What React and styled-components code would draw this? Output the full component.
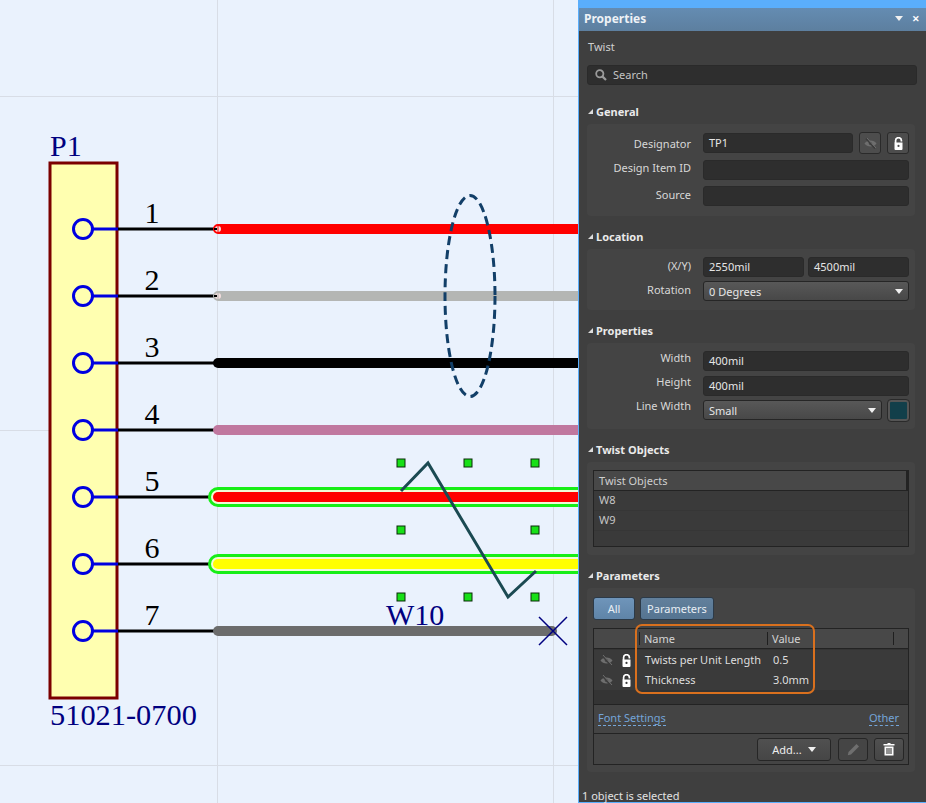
import React from "react";
import styled, { createGlobalStyle } from "styled-components";

const GlobalStyle = createGlobalStyle`
  html, body {
    margin: 0;
    padding: 0;
    background: #eaf2fd;
  }
  * {
    box-sizing: border-box;
  }
`;

const WIRES = [
  { y: 229, color: "#ff0000", label: "1", pad: true },
  { y: 296, color: "#b4b6b4", label: "2", pad: true },
  { y: 363, color: "#000000", label: "3" },
  { y: 430, color: "#c0789f", label: "4" },
  { y: 497, color: "#ff0000", label: "5", selected: true },
  { y: 564, color: "#ffff00", label: "6", selected: true },
  { y: 631, color: "#6c6c6c", label: "7", end: 552 },
];

const HANDLES = [
  [401, 463],
  [468, 463],
  [535, 463],
  [401, 530],
  [535, 530],
  [401, 597],
  [468, 597],
  [535, 597],
];

function Schematic() {
  return (
    <Canvas viewBox="0 0 578 803">
      <rect width="578" height="803" fill="#eaf2fd" />
      {[217.5, 553.5].map((x) => (
        <line key={x} x1={x} y1="0" x2={x} y2="803" stroke="#d8dde6" strokeWidth="1" />
      ))}
      {[96.5, 430.5, 765.5].map((y) => (
        <line key={y} x1="0" y1={y} x2="578" y2={y} stroke="#d8dde6" strokeWidth="1" />
      ))}

      <rect x="50" y="163" width="67" height="535" fill="#ffffb0" stroke="#7b0000" strokeWidth="3" />
      <text x="50" y="156" fontFamily="Liberation Serif" fontSize="30" fill="#000080">P1</text>
      <text x="50" y="725" fontFamily="Liberation Serif" fontSize="30.4" fill="#000080">51021-0700</text>

      {WIRES.map((w) => (
        <g key={w.y}>
          <line x1="93" y1={w.y} x2="118" y2={w.y} stroke="#0000e0" strokeWidth="3" />
          <line x1="118" y1={w.y} x2="214" y2={w.y} stroke="#000" strokeWidth="3" />
          <circle cx="83" cy={w.y} r="9.5" fill="none" stroke="#0000e0" strokeWidth="3" />
          <text x="144.5" y={w.y - 6} fontFamily="Liberation Serif" fontSize="30" fill="#000">{w.label}</text>
          {w.selected && (
            <path
              d={`M578 ${w.y - 8.5} H218 a8.5 8.5 0 0 0 0 17 H578`}
              fill="#f0fbd8"
              stroke="#17ee17"
              strokeWidth="3"
            />
          )}
          <line
            x1="218"
            y1={w.y}
            x2={w.end || 578}
            y2={w.y}
            stroke={w.color}
            strokeWidth="10"
            strokeLinecap={w.end ? "round" : "butt"}
          />
          {!w.pad && !w.end && <circle cx="218" cy={w.y} r="5" fill={w.color} />}
          {w.pad && (
            <>
              <circle cx="218" cy={w.y} r="4" fill="#f4dede" stroke={w.color} strokeWidth="2" />
              <path d={`M214 ${w.y} H217`} stroke="#000" strokeWidth="2" />
              <path d={`M218 ${w.y - 4} V${w.y + 4}`} stroke={w.color} strokeWidth="1" />
            </>
          )}
        </g>
      ))}

      <text x="386" y="625" fontFamily="Liberation Serif" fontSize="30" fill="#000080">W10</text>
      <path d="M539 617 L567 645 M567 617 L539 645" stroke="#000080" strokeWidth="1.5" fill="none" />

      <ellipse
        cx="470"
        cy="296"
        rx="25"
        ry="100.5"
        fill="none"
        stroke="#123f68"
        strokeWidth="3"
        strokeDasharray="9 5"
      />

      <polyline points="401,491 428,463 508,597 536,571" fill="none" stroke="#1b4a52" strokeWidth="3" />
      {HANDLES.map(([x, y]) => (
        <rect key={`${x}-${y}`} x={x - 4} y={y - 4} width="8" height="8" fill="#17e017" stroke="#0a2a0a" strokeWidth="1" />
      ))}
    </Canvas>
  );
}

function LockIcon() {
  return (
    <svg width="9" height="13" viewBox="0 0 9 13">
      <path d="M1.6 6 V3.6 a2.9 2.9 0 0 1 5.8 0 V4.6" fill="none" stroke="#fff" strokeWidth="1.7" />
      <path
        d="M0.5 5.5 H8.5 V12 a1 1 0 0 1 -1 1 H1.5 a1 1 0 0 1 -1 -1 Z M4.5 7.8 a1.1 1.1 0 0 0 0 2.2 a1.1 1.1 0 0 0 0 -2.2 Z"
        fill="#fff"
        fillRule="evenodd"
      />
    </svg>
  );
}

function EyeIcon() {
  return (
    <svg width="13" height="13" viewBox="0 0 13 13">
      <path d="M0.5 6.5 C3 2.5 10 2.5 12.5 6.5 C10 10.5 3 10.5 0.5 6.5 Z" fill="#6e6e6e" />
      <circle cx="6.5" cy="6.5" r="1.7" fill="#4a4a4a" />
      <path d="M2 1.5 L11 11.5" stroke="#3c3c3c" strokeWidth="1.8" />
      <path d="M3 1 L12 11" stroke="#6e6e6e" strokeWidth="1" />
    </svg>
  );
}

function PencilIcon() {
  return (
    <svg width="13" height="13" viewBox="0 0 13 13">
      <path d="M9.5 1 L12 3.5 L4 11.5 L0.8 12.2 L1.5 9 Z" fill="#6f6f6f" />
    </svg>
  );
}

function TrashIcon() {
  return (
    <svg width="12" height="14" viewBox="0 0 12 14">
      <path d="M4.5 1 H7.5 V2 H11.5 V3.4 H0.5 V2 H4.5 Z" fill="#fff" />
      <path
        d="M1.5 4.5 H10.5 V13.5 H1.5 Z M3.4 6 V12 H4.6 V6 Z M5.4 6 V12 H6.6 V6 Z M7.4 6 V12 H8.6 V6 Z"
        fill="#fff"
        fillRule="evenodd"
      />
    </svg>
  );
}

function SearchIcon() {
  return (
    <svg width="12" height="12" viewBox="0 0 12 12">
      <circle cx="4.8" cy="4.8" r="3.6" fill="none" stroke="#9a9a9a" strokeWidth="1.8" />
      <path d="M7.6 7.6 L11 11" stroke="#9a9a9a" strokeWidth="2.2" />
    </svg>
  );
}

function Section({ title, gap, top, bottom, children }) {
  return (
    <>
      <SectionTitle>
        <Caret />
        {title}
      </SectionTitle>
      <SectionBox $gap={gap} $top={top} $bottom={bottom}>
        {children}
      </SectionBox>
    </>
  );
}

// lift: how far the label sits above the centre of its field
function Row({ label, lift = 0, children }) {
  return (
    <FormRow>
      <FieldLabel $lift={lift}>{label}</FieldLabel>
      <Controls>{children}</Controls>
    </FormRow>
  );
}

function Select({ value }) {
  return (
    <SelectBox>
      {value}
      <DownArrow />
    </SelectBox>
  );
}

function App() {
  return (
    <Page>
      <GlobalStyle />
      <Schematic />
      <Panel>
        <PanelHeader>
          <PanelTitle>Properties</PanelTitle>
          <HeaderIcons>
            <DownArrow />
            <CloseMark>✕</CloseMark>
          </HeaderIcons>
        </PanelHeader>
        <PanelBody>
          <Kind>Twist</Kind>
          <SearchBox>
            <SearchIcon />
            Search
          </SearchBox>

          <Section title="General" gap="6.5px" top={9} bottom={10}>
            <Row label="Designator">
              <Field>TP1</Field>
              <IconButton>
                <EyeIcon />
              </IconButton>
              <IconButton>
                <LockIcon />
              </IconButton>
            </Row>
            <Row label="Design Item ID" lift={2}>
              <Field />
            </Row>
            <Row label="Source" lift={2}>
              <Field />
            </Row>
          </Section>

          <Section title="Location" gap="4px" top={8} bottom={9}>
            <Row label="(X/Y)" lift={2}>
              <Field>2550mil</Field>
              <Field>4500mil</Field>
            </Row>
            <Row label="Rotation" lift={2}>
              <Select value="0 Degrees" />
            </Row>
          </Section>

          <Section title="Properties" gap="4.5px" top={8} bottom={9}>
            <Row label="Width" lift={4}>
              <Field>400mil</Field>
            </Row>
            <Row label="Height" lift={4}>
              <Field>400mil</Field>
            </Row>
            <Row label="Line Width" lift={5}>
              <Select value="Small" />
              <Swatch />
            </Row>
          </Section>

          <Section title="Twist Objects" top={8} bottom={8}>
            <ObjectTable>
              <ObjectHeader>Twist Objects</ObjectHeader>
              <ObjectRow>W8</ObjectRow>
              <ObjectRow>W9</ObjectRow>
            </ObjectTable>
          </Section>

          <Section title="Parameters" top={9} bottom={7}>
            <FilterBar>
              <FilterButton $wide={false}>All</FilterButton>
              <FilterButton $wide>Parameters</FilterButton>
            </FilterBar>
            <ParamTable>
              <ParamHeader>
                <span />
                <HeadCell>Name</HeadCell>
                <HeadCell>Value</HeadCell>
                <HeadCell />
              </ParamHeader>
              <ParamBody>
                {[
                  ["Twists per Unit Length", "0.5"],
                  ["Thickness", "3.0mm"],
                ].map(([name, value]) => (
                  <ParamRow key={name}>
                    <RowIcons>
                      <EyeIcon />
                      <LockIcon />
                    </RowIcons>
                    <ParamCell>{name}</ParamCell>
                    <ParamCell>{value}</ParamCell>
                  </ParamRow>
                ))}
              </ParamBody>
              <LinkRow>
                <DashedLink>Font Settings</DashedLink>
                <DashedLink>Other</DashedLink>
              </LinkRow>
              <ActionRow>
                <AddButton>
                  Add...
                  <DownArrow />
                </AddButton>
                <ActionButton $disabled>
                  <PencilIcon />
                </ActionButton>
                <ActionButton>
                  <TrashIcon />
                </ActionButton>
              </ActionRow>
              <Highlight />
            </ParamTable>
          </Section>
        </PanelBody>
        <StatusBar>1 object is selected</StatusBar>
      </Panel>
    </Page>
  );
}

const Page = styled.div`
  display: flex;
  width: 926px;
  height: 803px;
  overflow: hidden;
  font-family: "Noto Sans", "Open Sans", sans-serif;
  font-size: 11px;
  color: #e2e2e2;
`;

const Canvas = styled.svg`
  flex: 0 0 578px;
  width: 578px;
  height: 803px;
  display: block;
`;

const Panel = styled.div`
  flex: 0 0 348px;
  height: 803px;
  display: flex;
  flex-direction: column;
  background: #3f3f3f;
  border-left: 1px solid #5aaefc;
  border-top: 8px solid #5aaefc;
  border-bottom: 1px solid #5aaefc;
`;

const PanelHeader = styled.div`
  height: 23px;
  display: flex;
  align-items: center;
  justify-content: space-between;
  padding: 0 6px 2px 5px;
  background: linear-gradient(#648cb2, #5d7f9f);
`;

const PanelTitle = styled.div`
  font-size: 12px;
  font-weight: 700;
  color: #eef2f6;
`;

const HeaderIcons = styled.div`
  display: flex;
  align-items: center;
  gap: 9px;
`;

const CloseMark = styled.span`
  font-size: 9px;
  font-weight: 700;
  color: #fff;
`;

const PanelBody = styled.div`
  padding: 0 9px 0 8px;
`;

const Kind = styled.div`
  height: 34px;
  line-height: 32px;
  padding-left: 1px;
  color: #cfcfcf;
`;

const SearchBox = styled.div`
  height: 20px;
  display: flex;
  align-items: center;
  gap: 6px;
  padding: 0 0 1px 7px;
  border-radius: 3px;
  background: #2e2e2e;
  border: 1px solid #2a2a2a;
  color: #c4c4c4;
  margin-bottom: 15px;
`;

const SectionTitle = styled.div`
  height: 24px;
  padding-bottom: 2px;
  display: flex;
  align-items: center;
  gap: 3px;
  font-weight: 700;
  font-size: 11px;
  color: #eaeaea;
`;

const Caret = styled.span`
  width: 0;
  height: 0;
  margin-left: 1px;
  border-left: 5px solid transparent;
  border-bottom: 5px solid #dcdcdc;
`;

const SectionBox = styled.div`
  display: flex;
  flex-direction: column;
  gap: ${(p) => p.$gap || "0"};
  padding: ${(p) => p.$top}px 6px ${(p) => p.$bottom}px 6px;
  margin: 0 2px 9px 0;
  background: #444444;
  border-radius: 4px;
`;

const FormRow = styled.div`
  display: grid;
  grid-template-columns: 98px 1fr;
  column-gap: 12px;
  align-items: center;
`;

const FieldLabel = styled.div`
  text-align: right;
  color: #d8d8d8;
  white-space: nowrap;
  transform: translateY(-${(p) => p.$lift}px);
`;

const Controls = styled.div`
  display: flex;
  gap: 4px;
  height: 20px;
`;

const Field = styled.div`
  flex: 1;
  height: 20px;
  line-height: 18px;
  padding-left: 5px;
  border-radius: 3px;
  background: #2e2e2e;
  border: 1px solid #2a2a2a;
  color: #e6e6e6;
`;

const IconButton = styled.div`
  flex: 0 0 22px;
  height: 22px;
  margin-top: -1px;
  margin-left: 2px;
  display: flex;
  align-items: center;
  justify-content: center;
  border-radius: 3px;
  background: #4d4d4d;
  border: 1px solid #2a2a2a;
`;

const SelectBox = styled.div`
  flex: 1;
  height: 20px;
  display: flex;
  align-items: center;
  justify-content: space-between;
  padding: 0 5px;
  border-radius: 3px;
  background: linear-gradient(#585858, #484848);
  border: 1px solid #262626;
  color: #e6e6e6;
`;

const DownArrow = styled.span`
  width: 0;
  height: 0;
  border-left: 4px solid transparent;
  border-right: 4px solid transparent;
  border-top: 5px solid #f0f0f0;
`;

const Swatch = styled.div`
  flex: 0 0 21px;
  margin-left: 2px;
  height: 21px;
  border-radius: 3px;
  background: #123f4a;
  border: 2px solid #555;
  outline: 1px solid #2a2a2a;
`;

const ObjectTable = styled.div`
  height: 77px;
  border: 1px solid #232323;
  background: #3a3a3a;
`;

const ObjectHeader = styled.div`
  height: 20px;
  line-height: 19px;
  padding-left: 5px;
  background: #484848;
  border-bottom: 1px solid #232323;
  border-right: 2px solid #232323;
  color: #cfcfcf;
`;

const ObjectRow = styled.div`
  height: 20px;
  line-height: 18px;
  padding-left: 5px;
  color: #c6c6c6;
  border-bottom: 1px solid #363636;
`;

const FilterBar = styled.div`
  display: flex;
  gap: 5px;
  margin-bottom: 8px;
`;

const FilterButton = styled.div`
  width: ${(p) => (p.$wide ? "74px" : "42px")};
  height: 23px;
  line-height: 22px;
  text-align: center;
  border-radius: 3px;
  background: ${(p) => (p.$wide ? "linear-gradient(#62809c, #557491)" : "linear-gradient(#6f95ba, #5f84a8)")};
  border: 1px solid #2c3a48;
  color: #e8eef4;
`;

const ParamTable = styled.div`
  position: relative;
  height: 137px;
  display: flex;
  flex-direction: column;
  border: 1px solid #232323;
`;

const paramColumns = "45px 128px 126px 1fr";

const ParamHeader = styled.div`
  flex: 0 0 20px;
  display: grid;
  grid-template-columns: ${paramColumns};
  background: #484848;
  border-bottom: 1px solid #232323;
`;

const HeadCell = styled.div`
  line-height: 19px;
  padding-left: 5px;
  color: #d4d4d4;
  position: relative;

  &::before {
    content: "";
    position: absolute;
    left: 0;
    top: 3px;
    bottom: 3px;
    width: 1px;
    background: #1f1f1f;
  }
`;

const ParamBody = styled.div`
  flex: 0 0 56px;
  padding-top: 1px;
  background: #343434;
  border-bottom: 1px solid #232323;
`;

const ParamRow = styled.div`
  height: 20px;
  display: grid;
  grid-template-columns: ${paramColumns};
  align-items: center;
  background: #3a3a3a;
`;

const RowIcons = styled.div`
  display: flex;
  align-items: center;
  gap: 9px;
  padding-left: 6px;
`;

const ParamCell = styled.div`
  padding: 0 0 2px 6px;
  color: #dedede;
  white-space: nowrap;
`;

const LinkRow = styled.div`
  flex: 0 0 29px;
  display: flex;
  align-items: center;
  justify-content: space-between;
  padding: 0 9px 2px 4px;
  border-bottom: 1px solid #232323;
`;

const DashedLink = styled.span`
  color: #74a5d8;
  border-bottom: 1px dashed #74a5d8;
  line-height: 14px;
`;

const ActionRow = styled.div`
  flex: 1;
  display: flex;
  align-items: center;
  justify-content: flex-end;
  gap: 6px;
  padding-right: 4px;
`;

const AddButton = styled.div`
  width: 74px;
  height: 23px;
  display: flex;
  align-items: center;
  justify-content: center;
  gap: 6px;
  margin-right: 1px;
  border-radius: 3px;
  background: linear-gradient(#505050, #464646);
  border: 1px solid #262626;
  color: #eee;
`;

const ActionButton = styled.div`
  width: 30px;
  height: 23px;
  display: flex;
  align-items: center;
  justify-content: center;
  border-radius: 3px;
  background: ${(p) => (p.$disabled ? "#454545" : "linear-gradient(#505050, #464646)")};
  border: 1px solid #262626;
`;

const Highlight = styled.div`
  position: absolute;
  left: 41px;
  top: -5px;
  width: 180px;
  height: 70px;
  border: 2px solid #d9701e;
  border-radius: 7px;
  pointer-events: none;
`;

const StatusBar = styled.div`
  margin-top: auto;
  padding-left: 3px;
  line-height: 13px;
  color: #e2e2e2;
`;

export default App;
